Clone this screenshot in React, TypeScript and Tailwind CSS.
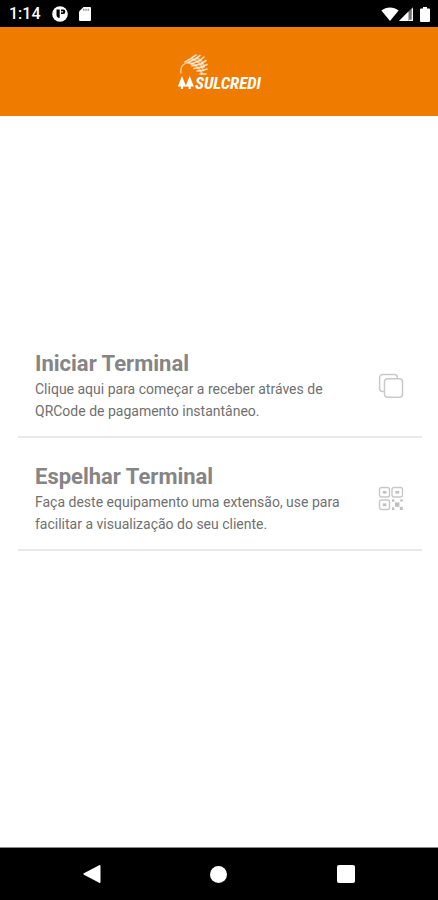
import React from "react";

const options = [
    {
        title: "Iniciar Terminal",
        description: "Clique aqui para começar a receber atráves de QRCode de pagamento instantâneo.",
        icon: <CopyIcon />,
    },
    {
        title: "Espelhar Terminal",
        description: "Faça deste equipamento uma extensão, use para facilitar a visualização do seu cliente.",
        icon: <QrIcon />,
    },
];

function CopyIcon() {
    return (
        <svg viewBox="0 0 26 26" className="size-[26px] shrink-0" fill="none" stroke="#cacaca" strokeWidth="1.5">
            <path d="M6.500 18.500H4.600a3 3 0 0 1-3-3V4.600a3 3 0 0 1 3-3h11.800a3 3 0 0 1 3 3v1.200" />
            <rect x="6.500" y="5.800" width="18" height="18.400" rx="3" />
        </svg>
    );
}

function QrIcon() {
    return (
        <svg viewBox="0 0 26 26" className="size-[26px] shrink-0" fill="none" stroke="#c8c8c8" strokeWidth="1.4">
            <rect x="1.500" y="1.500" width="10" height="9.500" rx="2" />
            <rect x="14" y="1.500" width="10.500" height="9.500" rx="2" />
            <rect x="1.500" y="14" width="10" height="9.500" rx="2" />
            <g fill="#c0c0c0" stroke="none">
                <rect x="4.800" y="5" width="3.600" height="2.600" />
                <rect x="17.400" y="5" width="3.800" height="2.600" />
                <rect x="4.800" y="17.400" width="3.600" height="2.800" />
                <rect x="14" y="13.400" width="2.400" height="2.400" />
                <rect x="22.200" y="13.400" width="2.600" height="2.200" />
                <rect x="17" y="16.400" width="4.400" height="4.400" />
                <rect x="14" y="21.400" width="2.400" height="2.600" />
                <rect x="21.800" y="20.800" width="3" height="3.200" />
            </g>
        </svg>
    );
}

function Logo() {
    return (
        <svg viewBox="0 -3 90 45" className="h-[45px] w-[90px]" role="img" aria-label="Sulcredi">
            <g fill="none" stroke="#fff" strokeLinecap="round">
                <g strokeWidth="1.600" opacity="0.750">
                    <path d="M7 21C6 14 10 11 15 10.500" opacity="0.700" />
                    <path d="M11 10 17 6.500 22 3" />
                    <path d="M15 10 22 6.500 26 3.500" />
                    <path d="M17 12 25 9 30 5" />
                    <path d="M18 14 27 12 32 8.500" />
                    <path d="M20 16.500 28 15 33 12.500" />
                    <path d="M23 19 29 18.500 33 17" />
                    <path d="M26 22 32 22" />
                </g>
                <path d="M14 10.500c6 1 11 5 14 11M18 7c6 1.500 9 5 11 11M23 6c4 2 6 5 7 9" strokeWidth="2" opacity="0.500" />
            </g>
            <g fill="#fff">
                <path d="M8 24 12.200 34.500H9.100V37H6.900v-2.500H3.800z" />
                <path d="M15.700 24 19.900 34.500H16.800V37H14.600v-2.500H11.500z" />
            </g>
            <text
                x="21"
                y="37"
                fill="#fff"
                fontSize="17"
                className="font-['Roboto_Condensed','Open_Sans_Condensed',sans-serif] font-bold italic"
            >
                SULCREDI
            </text>
        </svg>
    );
}

function StatusBar() {
    return (
        <div className="flex h-[27px] shrink-0 items-center justify-between bg-black pt-px pr-2 pl-[9px] text-white">
            <div className="flex items-center">
                <span className="text-base leading-6 font-medium">1:14</span>
                <svg viewBox="0 0 16 16" className="ml-[11px] size-4">
                    <circle cx="8" cy="8" r="7.800" fill="#fff" />
                    <path d="M4.500 3.500h3.200v8.200H6A3.500 3.500 0 0 1 4.500 9z" fill="#000" />
                    <path d="M9 3.500h2.200a2.200 2.200 0 0 1 0 4.400H9z" fill="#000" />
                    <path d="M9.300 5h1.500v1.500H9.300z" fill="#fff" />
                </svg>
                <svg viewBox="0 0 12 14" className="ml-[11px] h-3.5 w-3" fill="#fff">
                    <path d="M4.500 0H11a1 1 0 0 1 1 1v12a1 1 0 0 1-1 1H1a1 1 0 0 1-1-1V4.500z" />
                    <path d="M4.800 1.800v2M7 1.800v2M9.200 1.800v2" stroke="#000" strokeWidth="0.600" />
                </svg>
            </div>
            <div className="flex items-center">
                <svg viewBox="0 0 18 14" className="h-3.5 w-[18px]" fill="#fff">
                    <path d="M9 14 .4 3.400C5.500-.6 12.500-.6 17.600 3.400z" />
                </svg>
                <svg viewBox="0 0 14 14" className="h-3.5 w-3.5" fill="#fff">
                    <path d="M14 0v14H0z" opacity="0.450" />
                    <path d="M9.500 4.500V14H0z" />
                    <path d="M13.400 1.500v11.900H10" fill="none" stroke="#fff" strokeWidth="1.200" />
                </svg>
                <svg viewBox="0 0 10 15" className="ml-[7px] h-[15px] w-2.5" fill="#fff">
                    <path d="M3 0h4v1.500h2a1 1 0 0 1 1 1V14a1 1 0 0 1-1 1H1a1 1 0 0 1-1-1V2.500a1 1 0 0 1 1-1h2z" />
                </svg>
            </div>
        </div>
    );
}

function NavigationBar() {
    return (
        <nav className="flex h-[53px] shrink-0 items-center justify-around border-t border-[#8a8a8a] bg-black px-7">
            <button type="button" aria-label="Voltar" className="p-2">
                <svg viewBox="0 0 18 20" className="h-5 w-[18px]" fill="#fff">
                    <path d="M16.200 1.200.9 9.300q-1.100.7 0 1.400l15.300 8.100q1.300.6 1.300-.8V2q0-1.400-1.300-.8z" />
                </svg>
            </button>
            <button type="button" aria-label="Início" className="p-2">
                <span className="block size-[17px] rounded-full bg-white" />
            </button>
            <button type="button" aria-label="Recentes" className="p-2">
                <span className="block size-[18px] rounded-xs bg-white" />
            </button>
        </nav>
    );
}

export default function App() {
    return (
        <div className="flex min-h-screen flex-col bg-white font-[Roboto,sans-serif]">
            <StatusBar />
            <header className="flex h-[89px] shrink-0 items-center justify-center bg-[#ef7b00]">
                <Logo />
            </header>

            <main className="flex flex-1 flex-col justify-center pr-4 pb-[88px] pl-[18px]">
                {options.map((option) => (
                    <button
                        key={option.title}
                        type="button"
                        className="flex w-full items-center justify-between border-b-2 border-[#e9e9e9] pt-[25px] pr-[18px] pb-3.5 pl-[17px] text-left"
                    >
                        <div className="max-w-80">
                            <h2 className="text-[22px] leading-7 font-bold text-[#858585]">{option.title}</h2>
                            <p className="text-sm leading-[22px] text-[#707070]">{option.description}</p>
                        </div>
                        {option.icon}
                    </button>
                ))}
            </main>

            <NavigationBar />
        </div>
    );
}
